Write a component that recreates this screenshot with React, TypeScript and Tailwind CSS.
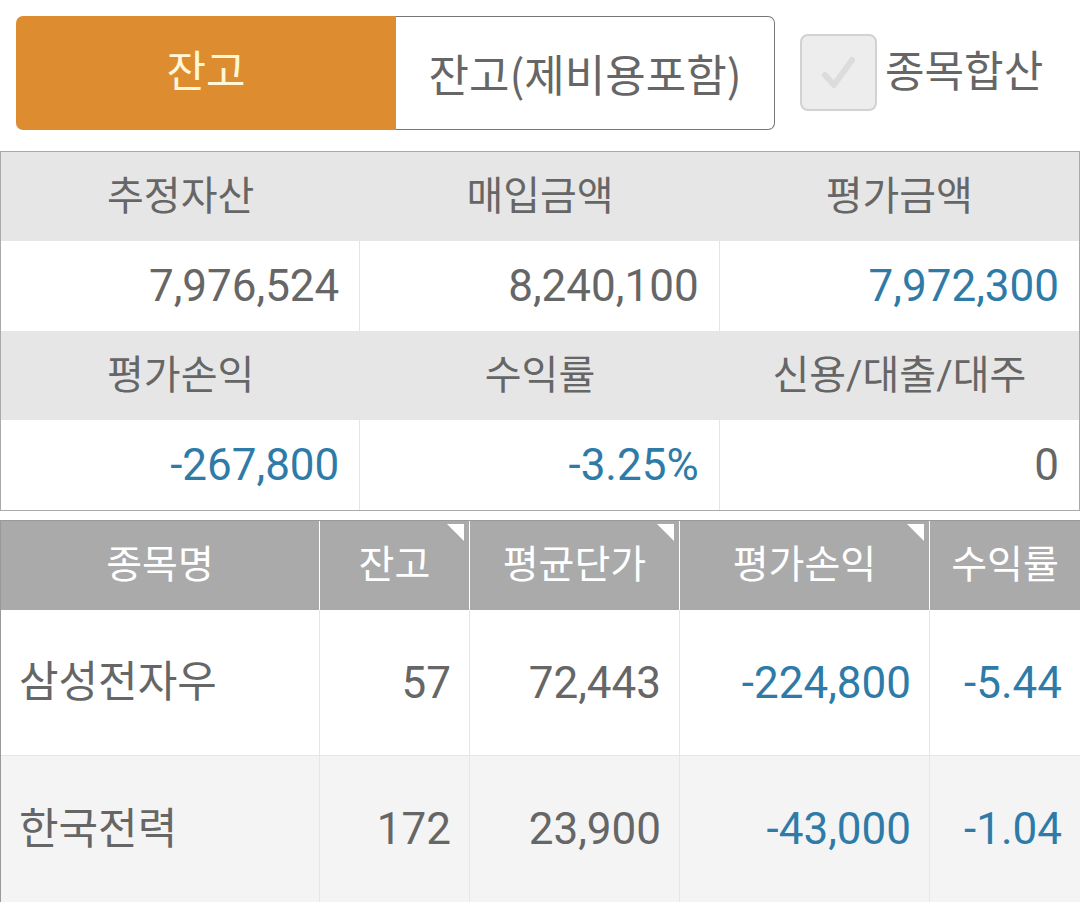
import React from 'react'

const FONT = { fontFamily: 'Roboto, "Noto Sans CJK KR", "Noto Sans", sans-serif' }
const KR = { fontFamily: '"Noto Sans CJK KR", Roboto, sans-serif' }

const SUMMARY = [
    [
        { label: '추정자산', value: '7,976,524', blue: false },
        { label: '매입금액', value: '8,240,100', blue: false },
        { label: '평가금액', value: '7,972,300', blue: true },
    ],
    [
        { label: '평가손익', value: '-267,800', blue: true },
        { label: '수익률', value: '-3.25%', blue: true },
        { label: '신용/대출/대주', value: '0', blue: false },
    ],
]

const COLS = [
    { label: '종목명', sort: false },
    { label: '잔고', sort: true },
    { label: '평균단가', sort: true },
    { label: '평가손익', sort: true },
    { label: '수익률', sort: false },
]

const ROWS = [
    { name: '삼성전자우', qty: '57', avg: '72,443', pl: '-224,800', rate: '-5.44' },
    { name: '한국전력', qty: '172', avg: '23,900', pl: '-43,000', rate: '-1.04' },
]

const GRID = 'grid grid-cols-[319px_150px_210px_250px_1fr]'

export default function App() {
    return (
        <div className="w-[1080px] h-[906px] overflow-hidden bg-white text-[#666]" style={FONT}>
            {/* ── 상단 탭 + 체크박스 ── */}
            <div className="flex items-center h-[151px] pl-4 pb-[6px]">
                <div className="flex h-[114px] w-[759px]">
                    <button className="w-[380px] rounded-l-[7px] bg-[#dd8d30] text-[#fff7d8] text-[43px]">
                        잔고
                    </button>
                    <button className="flex-1 rounded-r-[7px] border border-l-0 border-[#777] bg-white text-[#666] text-[44px]" style={KR}>
                        잔고(제비용포함)
                    </button>
                </div>
                <div className="flex items-center ml-[25px]">
                    <div className="w-[77px] h-[77px] rounded-[8px] border-2 border-[#d2d2d2] bg-[#ededed] flex items-center justify-center">
                        <svg width="40" height="40" viewBox="0 0 40 40" fill="none">
                            <path d="M6 22 L15 32 L33 7" stroke="#dcdcdc" strokeWidth="6" strokeLinecap="round" strokeLinejoin="round" />
                        </svg>
                    </div>
                    <span className="ml-[8px] text-[43px] text-[#666]">종목합산</span>
                </div>
            </div>

            {/* ── 요약 ── */}
            <div className="border border-[#aaa]">
                {SUMMARY.map((row, i) => (
                    <div key={i}>
                        <div className="grid grid-cols-3 h-[89px] bg-[#e6e6e6]">
                            {row.map(c => (
                                <div key={c.label} className="flex items-center justify-center text-[40px]">
                                    {c.label}
                                </div>
                            ))}
                        </div>
                        <div className="grid grid-cols-3 h-[90px] bg-white">
                            {row.map((c, j) => (
                                <div
                                    key={c.label}
                                    className={`flex items-center justify-end pr-[20px] text-[44px] ${j < 2 ? 'border-r border-[#e4e4e4]' : ''} ${c.blue ? 'text-[#2f7ba8]' : ''}`}
                                >
                                    {c.value}
                                </div>
                            ))}
                        </div>
                    </div>
                ))}
            </div>

            {/* ── 종목 리스트 ── */}
            <div className="mt-[9px] border-t border-l border-[#999]">
                <div className={`${GRID} h-[89px] bg-[#aaa]`}>
                    {COLS.map((c, i) => (
                        <div
                            key={c.label}
                            className={`relative flex items-center justify-center text-white text-[39px] ${i < 4 ? 'border-r border-white' : ''}`}
                        >
                            {c.label}
                            {c.sort && (
                                <span className="absolute top-[3px] right-[5px] w-0 h-0 border-t-[17px] border-l-[17px] border-t-white border-l-transparent" />
                            )}
                        </div>
                    ))}
                </div>
                {ROWS.map((r, i) => (
                    <div
                        key={r.name}
                        className={`${GRID} h-[146px] ${i % 2 ? 'bg-[#f4f4f4]' : 'bg-white'} ${i === 0 ? 'border-b border-[#e6e6e6]' : ''}`}
                    >
                        <div className="flex items-center pl-[18px] text-[43px] border-r border-[#e6e6e6]">{r.name}</div>
                        <div className="flex items-center justify-end pr-[18px] text-[44px] border-r border-[#e6e6e6]">{r.qty}</div>
                        <div className="flex items-center justify-end pr-[18px] text-[44px] border-r border-[#e6e6e6]">{r.avg}</div>
                        <div className="flex items-center justify-end pr-[18px] text-[44px] text-[#2f7ba8] border-r border-[#e6e6e6]">{r.pl}</div>
                        <div className="flex items-center justify-end pr-[18px] text-[44px] text-[#2f7ba8]">{r.rate}</div>
                    </div>
                ))}
            </div>
        </div>
    )
}
